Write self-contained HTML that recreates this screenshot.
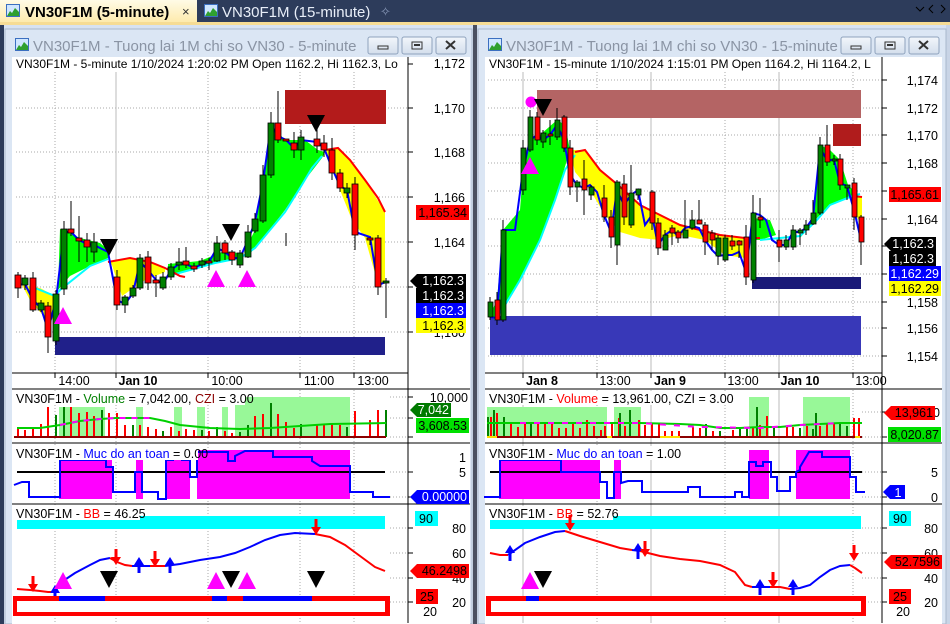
<!DOCTYPE html>
<html><head><meta charset="utf-8"><style>
html,body{margin:0;padding:0;width:950px;height:624px;overflow:hidden;background:#2d3c5b;}
svg{display:block}
text{font-family:"Liberation Sans",sans-serif;}
</style></head><body>
<svg width="950" height="624" viewBox="0 0 950 624" xmlns="http://www.w3.org/2000/svg">
<defs>
<linearGradient id="tab" x1="0" y1="0" x2="0" y2="1"><stop offset="0" stop-color="#fffbe6"/><stop offset="1" stop-color="#fde9a8"/></linearGradient>
<linearGradient id="btn" x1="0" y1="0" x2="0" y2="1"><stop offset="0" stop-color="#f2f6fb"/><stop offset="1" stop-color="#d3deec"/></linearGradient>
<g id="ico"><rect x="0" y="0" width="14" height="13" fill="#3b6fc0"/><rect x="1" y="1" width="12" height="11" fill="#cfe6ff"/><path d="M1 12 L4 7 L6 9 L9 4 L13 8 L13 12Z" fill="#2fa02f"/></g>
<g id="tu"><path d="M-9 9 L0 -8 L9 9Z" fill="#ff00ff"/></g>
<g id="td"><path d="M-9 -9 L9 -9 L0 8Z" fill="#000"/></g>
<g id="ad"><path d="M-1.5 -12 L1.5 -12 L1.5 -4 L5 -4 L0 4 L-5 -4 L-1.5 -4Z" fill="#ff0000"/></g>
<g id="au"><path d="M-1.5 12 L1.5 12 L1.5 4 L5 4 L0 -4 L-5 4 L-1.5 4Z" fill="#0000ff"/></g>
</defs>
<!-- tab bar -->
<rect x="0" y="0" width="950" height="22" fill="#2d3c5b"/>
<rect x="0" y="0" width="197" height="24" fill="url(#tab)"/>
<rect x="0" y="22" width="950" height="3" fill="#f6dc94"/>
<use href="#ico" x="6" y="4"/>
<text x="25" y="17" font-size="15" font-weight="bold" fill="#000">VN30F1M (5-minute)</text>
<text x="182" y="16" font-size="13" fill="#333">×</text>
<use href="#ico" x="204" y="4"/>
<text x="222" y="17" font-size="15" fill="#e8eef8">VN30F1M (15-minute)</text>
<text x="380" y="16" font-size="13" fill="#8898b8">✧</text>
<path d="M916 7 L920 11 L924 7" fill="none" stroke="#000" stroke-width="1"/>
<path d="M933 5 L929 9 L933 13 M941 5 L945 9 L941 13" fill="none" stroke="#000" stroke-width="1"/>
<!-- MDI background -->
<rect x="0" y="25" width="950" height="599" fill="#d7e2f1"/>
<rect x="0" y="25" width="4" height="599" fill="#2d3c5b"/>
<rect x="473" y="25" width="4" height="599" fill="#4a5060"/>
<rect x="946" y="25" width="4" height="599" fill="#c8d4e6"/>
<!-- left window frame -->
<rect x="5" y="29" width="467" height="595" fill="#dbe6f4" stroke="#a8b8cc"/>
<use href="#ico" x="15" y="38"/>
<text x="33" y="51" font-size="15" fill="#8a94a4">VN30F1M - Tuong lai 1M chi so VN30 - 5-minute</text>
<rect x="368" y="37" width="30" height="17" rx="2" fill="url(#btn)" stroke="#8fa3bd"/>
<rect x="402" y="37" width="30" height="17" rx="2" fill="url(#btn)" stroke="#8fa3bd"/>
<rect x="436" y="37" width="30" height="17" rx="2" fill="url(#btn)" stroke="#8fa3bd"/>
<rect x="378" y="46" width="10" height="3" fill="none" stroke="#333"/>
<rect x="412" y="42" width="10" height="7" fill="none" stroke="#333"/><rect x="414" y="44" width="6" height="2" fill="#333"/>
<path d="M446 41 L455 49 M455 41 L446 49" stroke="#333" stroke-width="2"/>
<rect x="12" y="57" width="458" height="567" fill="#fff"/>
<!-- right window frame -->
<rect x="478" y="29" width="468" height="595" fill="#dbe6f4" stroke="#a8b8cc"/>
<use href="#ico" x="488" y="38"/>
<text x="506" y="51" font-size="15" fill="#8a94a4">VN30F1M - Tuong lai 1M chi so VN30 - 15-minute</text>
<rect x="841" y="37" width="30" height="17" rx="2" fill="url(#btn)" stroke="#8fa3bd"/>
<rect x="875" y="37" width="30" height="17" rx="2" fill="url(#btn)" stroke="#8fa3bd"/>
<rect x="909" y="37" width="30" height="17" rx="2" fill="url(#btn)" stroke="#8fa3bd"/>
<rect x="851" y="46" width="10" height="3" fill="none" stroke="#333"/>
<rect x="885" y="42" width="10" height="7" fill="none" stroke="#333"/><rect x="887" y="44" width="6" height="2" fill="#333"/>
<path d="M919 41 L928 49 M928 41 L919 49" stroke="#333" stroke-width="2"/>
<rect x="485" y="57" width="457" height="567" fill="#fff"/>

<!-- ============ LEFT CHART ============ -->
<g stroke="#aaa" stroke-dasharray="1,2" stroke-width="1">
<path d="M16 108H408 M16 152H408 M16 197H408 M16 242H408 M16 287H408 M16 332H408"/>
<path d="M55 72V373 M208 72V373 M300 72V373 M354 72V373"/>
<path d="M55 390V623 M208 390V623 M300 390V623 M354 390V623 M116 390V623"/>
<path d="M390 397H408 M390 418H408 M390 437H408 M390 472H408 M390 497H408 M390 528H408 M390 553H408 M390 578H408 M390 602H408"/>
</g>
<path d="M116 72V373" stroke="#bbb"/>
<rect x="285" y="90" width="101" height="34" fill="#b31b1b"/>
<rect x="55" y="337" width="330" height="18" fill="#20208a"/>
<!-- clouds -->
<g>
<path d="M22 285 L40 288 L55 296 L55 320 L45 318 L30 300Z" fill="#ffff00"/>
<path d="M60 229 L80 238 L100 243 L108 250 L108 258 L90 266 L70 276 L58 290Z" fill="#00ff00"/>
<path d="M108 262 L130 258 L150 262 L165 268 L165 272 L145 280 L122 296 L112 265Z" fill="#ffff00"/>
<path d="M168 264 L200 261 L222 252 L240 253 L240 258 L215 263 L190 270 L168 276Z" fill="#00ff00"/>
<path d="M244 252 L255 230 L263 178 L271 125 L285 140 L305 140 L318 150 L325 152 L322 158 L305 180 L285 210 L265 236 L248 256Z" fill="#00ff00"/>
<path d="M325 150 L338 148 L350 160 L365 180 L385 212 L385 284 L378 284 L365 238 L352 220 L340 190 L328 158Z" fill="#ffff00"/>
</g>
<polyline points="168,276 190,270 215,263 240,258 255,248 270,230 285,212 300,188 312,168 322,156" fill="none" stroke="#00ffff" stroke-width="2"/>
<polyline points="35,288 55,296 60,290 90,266 108,259" fill="none" stroke="#00ffff" stroke-width="2"/>
<polyline points="325,150 338,148 350,160 365,180 378,198 385,212" fill="none" stroke="#ff0000" stroke-width="2"/>
<polyline points="108,262 130,258 150,262 165,268 180,276 185,277" fill="none" stroke="#ff0000" stroke-width="2"/>
<polyline points="18,285 25,284 33,300 41,308 48,330 56,300 64,232 71,232 79,240 87,244 94,245 108,252 117,300 125,304 133,293 140,262 148,270 156,280 163,284 171,270 179,264 186,264 194,268 202,264 209,262 217,248 225,252 232,258 240,258 248,240 255,222 263,182 271,125 278,136 286,140 294,148 301,140 317,142 324,148 332,168 340,186 347,190 355,232 370,237 378,285 386,282" fill="none" stroke="#0000ff" stroke-width="2"/>
<!-- left candles -->
<g stroke="#000" stroke-width="1">
<path d="M18 272V298 M25 275V290 M33 272V312 M41 300V312 M48 302V353 M56 290V345 M64 221V295 M71 201V236 M79 216V262 M87 233V262 M94 233V262 M117 270V310 M125 295V313 M133 285V298 M140 254V290 M148 251V290 M156 275V297 M163 272V290 M171 263V280 M179 248V270 M186 247V268 M194 263V272 M202 258V268 M209 258V270 M217 236V262 M225 240V260 M232 250V265 M240 250V268 M248 225V258 M255 213V233 M263 165V223 M271 112V178 M278 91V143 M286 233V246 M294 132V158 M301 130V160 M317 128V153 M324 135V157 M332 138V180 M340 169V192 M347 183V198 M355 177V250 M370 238V245 M378 235V295 M386 278V318"/>
</g>
<g stroke="#000" stroke-width="0.8">
<rect x="15" y="275" width="6" height="13" fill="#ff0000"/>
<rect x="22" y="278" width="6" height="7" fill="#008000"/>
<rect x="30" y="278" width="6" height="32" fill="#ff0000"/>
<rect x="38" y="303" width="6" height="7" fill="#008000"/>
<rect x="45" y="306" width="6" height="31" fill="#ff0000"/>
<rect x="53" y="294" width="6" height="47" fill="#008000"/>
<rect x="61" y="229" width="6" height="60" fill="#008000"/>
<rect x="68" y="229" width="6" height="4" fill="#ff0000"/>
<rect x="76" y="238" width="6" height="3" fill="#ff0000"/>
<rect x="84" y="240" width="6" height="7" fill="#ff0000"/>
<rect x="91" y="242" width="6" height="10" fill="#008000"/>
<rect x="114" y="277" width="6" height="28" fill="#ff0000"/>
<rect x="122" y="297" width="6" height="8" fill="#008000"/>
<rect x="130" y="288" width="6" height="8" fill="#008000"/>
<rect x="137" y="258" width="6" height="30" fill="#008000"/>
<rect x="145" y="257" width="6" height="26" fill="#ff0000"/>
<rect x="153" y="280" width="6" height="3" fill="#ff0000"/>
<rect x="160" y="277" width="6" height="11" fill="#008000"/>
<rect x="168" y="267" width="6" height="10" fill="#008000"/>
<rect x="176" y="262" width="6" height="3" fill="#008000"/>
<rect x="183" y="261" width="6" height="4" fill="#ff0000"/>
<rect x="191" y="266" width="6" height="3" fill="#ff0000"/>
<rect x="199" y="261" width="6" height="4" fill="#008000"/>
<rect x="206" y="261" width="6" height="2" fill="#ff0000"/>
<rect x="214" y="243" width="6" height="18" fill="#008000"/>
<rect x="222" y="243" width="6" height="10" fill="#ff0000"/>
<rect x="229" y="252" width="6" height="8" fill="#ff0000"/>
<rect x="237" y="253" width="6" height="12" fill="#008000"/>
<rect x="245" y="232" width="6" height="25" fill="#008000"/>
<rect x="252" y="219" width="6" height="12" fill="#008000"/>
<rect x="260" y="175" width="6" height="46" fill="#008000"/>
<rect x="268" y="123" width="6" height="52" fill="#008000"/>
<rect x="275" y="123" width="6" height="17" fill="#ff0000"/>
<rect x="283" y="139" width="6" height="2" fill="#ff0000"/>
<rect x="291" y="143" width="6" height="7" fill="#ff0000"/>
<rect x="298" y="137" width="6" height="13" fill="#008000"/>
<rect x="314" y="139" width="6" height="7" fill="#ff0000"/>
<rect x="321" y="143" width="6" height="7" fill="#ff0000"/>
<rect x="329" y="150" width="6" height="23" fill="#ff0000"/>
<rect x="337" y="173" width="6" height="15" fill="#ff0000"/>
<rect x="344" y="188" width="6" height="5" fill="#008000"/>
<rect x="352" y="184" width="6" height="51" fill="#ff0000"/>
<rect x="367" y="238" width="6" height="2" fill="#ff0000"/>
<rect x="375" y="238" width="6" height="49" fill="#ff0000"/>
<rect x="383" y="281" width="6" height="2" fill="#008000"/>
</g>
<use href="#tu" x="63" y="315"/><use href="#tu" x="216" y="278"/><use href="#tu" x="247" y="278"/>
<use href="#td" x="109" y="248"/><use href="#td" x="231" y="233"/><use href="#td" x="316" y="124"/>
<rect x="12" y="57" width="396" height="14" fill="#fff"/>
<text x="16" y="68" font-size="12" fill="#000">VN30F1M - 5-minute 1/10/2024 1:20:02 PM Open 1162.2, Hi 1162.3, Lo</text>
<!-- axes left -->
<path d="M408 57V623" stroke="#000"/>
<path d="M12 373H408 M12 389H470 M12 443H470 M12 504H470" stroke="#000"/>
<path d="M408 64H413 M408 108H413 M408 152H413 M408 197H413 M408 242H413 M408 287H413 M408 332H413 M55 373V378 M116 373V378 M208 373V378 M300 373V378 M354 373V378 M408 397H413 M408 418H413 M408 437H413 M408 472H413 M408 497H413 M408 528H413 M408 553H413 M408 578H413 M408 602H413" stroke="#000"/>
<g font-size="12.5" fill="#000" text-anchor="end">
<text x="465" y="68">1,172</text><text x="465" y="113">1,170</text><text x="465" y="157">1,168</text><text x="465" y="202">1,166</text><text x="465" y="247">1,164</text><text x="465" y="337">1,160</text>
<text x="468" y="402">10,000</text><text x="466" y="462">1</text><text x="466" y="477">5</text><text x="466" y="533">80</text><text x="466" y="558">60</text><text x="466" y="583">40</text><text x="466" y="607">20</text><text x="437" y="616">20</text>
</g>
<g font-size="12.5" text-anchor="middle">
<text x="74" y="385">14:00</text><text x="138" y="385" font-weight="bold">Jan 10</text><text x="227" y="385">10:00</text><text x="319" y="385">11:00</text><text x="373" y="385">13:00</text>
</g>
<rect x="416" y="205" width="53" height="15" fill="#ff0000"/><text x="467" y="217" font-size="12.5" text-anchor="end" fill="#000">1,165.34</text>
<path d="M410 281 L417 274 H466 V288 H417Z" fill="#000"/><text x="464" y="285" font-size="12.5" text-anchor="end" fill="#fff">1,162.3</text>
<rect x="416" y="288" width="50" height="15" fill="#000"/><text x="464" y="300" font-size="12.5" text-anchor="end" fill="#fff">1,162.3</text>
<rect x="416" y="303" width="50" height="15" fill="#0000ff"/><text x="464" y="315" font-size="12.5" text-anchor="end" fill="#fff">1,162.3</text>
<rect x="416" y="318" width="50" height="15" fill="#ffff00"/><text x="464" y="330" font-size="12.5" text-anchor="end" fill="#000">1,162.3</text>
<!-- left volume -->
<g fill="#98f898"><rect x="59" y="407" width="46" height="31"/><rect x="136" y="407" width="7" height="31"/><rect x="174" y="407" width="8" height="31"/><rect x="197" y="407" width="8" height="31"/><rect x="222" y="407" width="6" height="31"/><rect x="235" y="397" width="115" height="41"/></g>
<g stroke-width="2">
<path d="M18 437V427 M25 437V430 M33 437V428 M41 437V424 M48 437V407 M64 437V407 M71 437V407 M79 437V413 M87 437V412 M94 437V416 M109 437V413 M117 437V413 M125 437V425 M140 437V425 M148 437V427 M156 437V429 M171 437V427 M179 437V431 M186 437V429 M194 437V430 M209 437V431 M225 437V431 M232 437V433 M255 437V416 M263 437V414 M271 437V403 M278 437V414 M286 437V422 M294 437V428 M301 437V424 M317 437V424 M324 437V424 M332 437V424 M340 437V425 M355 437V411 M370 437V420 M378 437V410" stroke="#ff0000"/>
<path d="M56 437V415 M64 437V407 M102 437V410 M133 437V425 M163 437V431 M202 437V430 M217 437V427 M240 437V432 M248 437V425 M271 437V403 M301 437V424 M347 437V427 M386 437V410" stroke="#008000"/>
</g>
<path d="M14 437H386" stroke="#8b0000" stroke-width="2"/>
<polyline points="17,428 40,428 60,425 80,421 100,419 116,418 150,418 165,421 180,425 210,428 240,429 270,428 300,426 330,424 386,423" fill="none" stroke="#00d000" stroke-width="2"/>
<polyline points="60,425 80,421 100,419 116,418 150,418" fill="none" stroke="#ff00ff" stroke-width="2" stroke-dasharray="6,6"/>
<rect x="12" y="391" width="233" height="14" fill="#fff"/>
<text x="16" y="403" font-size="12.5"><tspan fill="#000">VN30F1M - </tspan><tspan fill="#008000">Volume</tspan><tspan fill="#000"> = 7,042.00, </tspan><tspan fill="#8b0000">CZI</tspan><tspan fill="#000"> = 3.00</tspan></text>
<path d="M410 410 L417 403 H451 V417 H417Z" fill="#007a00"/><text x="449" y="414" font-size="12.5" text-anchor="end" fill="#fff">7,042</text>
<rect x="416" y="418" width="53" height="15" fill="#00e000"/><text x="467" y="430" font-size="12.5" text-anchor="end" fill="#000">3,608.53</text>
<!-- left muc -->
<g fill="#ff00ff"><rect x="59" y="460" width="53" height="39"/><rect x="136" y="460" width="7" height="39"/><rect x="166" y="460" width="24" height="39"/><rect x="197" y="450" width="153" height="49"/></g>
<path d="M17 472H385" stroke="#000" stroke-width="2"/>
<polyline points="14,485 22,482 29,482 29,497 60,497 60,460 106,460 106,467 113,467 113,492 128,492 135,492 135,472 142,472 142,492 158,492 158,499 166,499 166,460 173,460 173,452 182,452 182,460 190,460 190,477 197,477 197,452 228,452 228,461 235,461 235,456 245,451 273,451 273,457 312,457 312,461 320,466 350,466 350,492 373,492 373,497 390,497" fill="none" stroke="#0000ff" stroke-width="2"/>
<rect x="12" y="446" width="186" height="14" fill="#fff"/>
<text x="16" y="458" font-size="12.5"><tspan fill="#000">VN30F1M - </tspan><tspan fill="#0000ff">Muc do an toan</tspan><tspan fill="#000"> = 0.00</tspan></text>
<path d="M410 497 L417 490 H469 V504 H417Z" fill="#0000ff"/><text x="467" y="501" font-size="12.5" text-anchor="end" fill="#fff">0.00000</text>
<!-- left BB -->
<rect x="17" y="516" width="368" height="13" fill="#00ffff"/>
<rect x="12" y="506" width="128" height="14" fill="#fff"/>
<text x="16" y="518" font-size="12.5"><tspan fill="#000">VN30F1M - </tspan><tspan fill="#ff0000">BB</tspan><tspan fill="#000"> = 46.25</tspan></text>
<polyline points="17,589 30,590 40,591 48,592 55,592" fill="none" stroke="#ff0000" stroke-width="2"/>
<polyline points="55,592 60,583 75,573 90,565 100,560 110,558" fill="none" stroke="#0000ff" stroke-width="2"/>
<polyline points="110,558 117,562 125,565 132,566" fill="none" stroke="#ff0000" stroke-width="2"/>
<polyline points="132,566 150,566" fill="none" stroke="#0000ff" stroke-width="2"/>
<polyline points="150,566 165,566" fill="none" stroke="#ff0000" stroke-width="2"/>
<polyline points="165,566 180,564 200,560 220,557 235,553 250,547 265,540 280,535 295,533 315,534" fill="none" stroke="#0000ff" stroke-width="2"/>
<polyline points="315,534 330,537 345,545 360,556 375,567 385,571" fill="none" stroke="#ff0000" stroke-width="2"/>
<use href="#ad" x="33" y="588"/><use href="#au" x="55" y="589"/><use href="#ad" x="116" y="561"/><use href="#au" x="139" y="561"/><use href="#ad" x="155" y="563"/><use href="#au" x="170" y="561"/><use href="#ad" x="316" y="531"/>
<use href="#tu" x="63" y="580"/><use href="#tu" x="216" y="580"/><use href="#tu" x="247" y="580"/>
<use href="#td" x="109" y="580"/><use href="#td" x="231" y="580"/><use href="#td" x="316" y="580"/>
<rect x="13" y="596" width="377" height="20" fill="#ff0000"/>
<rect x="17" y="601" width="368" height="11" fill="#fff"/>
<g fill="#0000ff"><rect x="59" y="596" width="46" height="5"/><rect x="212" y="596" width="15" height="5"/><rect x="243" y="596" width="69" height="5"/></g>
<rect x="415" y="511" width="23" height="15" fill="#00ffff"/><text x="426" y="523" font-size="12.5" text-anchor="middle">90</text>
<path d="M410 571 L417 564 H469 V578 H417Z" fill="#ff0000"/><text x="467" y="575" font-size="12.5" text-anchor="end" fill="#000">46.2498</text>
<rect x="416" y="589" width="22" height="15" fill="#ff0000"/><text x="427" y="601" font-size="12.5" text-anchor="middle">25</text>

<!-- ============ RIGHT CHART ============ -->
<g stroke="#aaa" stroke-dasharray="1,2">
<path d="M488 80H882 M488 108H882 M488 135H882 M488 163H882 M488 191H882 M488 219H882 M488 246H882 M488 274H882 M488 302H882 M488 328H882 M488 356H882"/>
<path d="M597 72V373 M725 72V373 M853 72V373 M597 390V623 M725 390V623 M853 390V623"/>
<path d="M862 412H882 M862 437H882 M862 472H882 M862 497H882 M862 528H882 M862 553H882 M862 578H882 M862 602H882"/>
</g>
<path d="M523 72V373 M651 72V373 M779 72V373 M523 390V623 M651 390V623 M779 390V623" stroke="#bbb"/>
<rect x="537" y="90" width="324" height="28" fill="#b46464"/>
<rect x="833" y="124" width="28" height="22" fill="#b01c1c"/>
<rect x="752" y="277" width="109" height="12" fill="#1a1a78"/>
<rect x="490" y="316" width="371" height="39" fill="#3838b8"/>
<path d="M490 315 L497 300 L503 230 L520 210 L523 170 L530 140 L540 135 L557 120 L565 125 L570 150 L555 200 L540 240 L520 280 L505 305 L495 320Z" fill="#00ff00"/>
<path d="M570 150 L585 150 L600 170 L618 185 L640 205 L660 215 L680 225 L700 230 L720 235 L745 238 L745 258 L725 255 L705 240 L680 235 L660 240 L640 238 L620 232 L605 215 L590 190 L575 172Z" fill="#ffff00"/>
<path d="M753 218 L770 220 L776 235 L760 240 L752 240Z" fill="#00ff00"/>
<path d="M800 236 L813 220 L820 145 L830 150 L840 160 L848 185 L858 195 L850 197 L830 205 L815 220 L800 238Z" fill="#00ff00"/>
<path d="M856 196 L862 196 L862 226 L856 215Z" fill="#ffff00"/>
<polyline points="495,320 505,305 520,280 540,240 555,200 565,170 575,155" fill="none" stroke="#00ffff" stroke-width="2"/>
<polyline points="760,240 780,238 800,236 815,222 830,205 850,197 860,194" fill="none" stroke="#00ffff" stroke-width="2"/>
<polyline points="575,152 585,150 600,170 618,185 640,205 660,215 680,225 700,230 720,235 745,238 760,238" fill="none" stroke="#ff0000" stroke-width="2"/>
<polyline points="852,196 862,197" fill="none" stroke="#ff0000" stroke-width="2"/>
<polyline points="490,317 497,318 503,230 515,230 523,170 530,140 537,135 543,140 550,135 557,125 564,140 570,175 577,185 584,188 590,185 597,192 604,215 611,232 617,190 624,205 631,195 638,190 645,225 652,215 658,245 665,235 672,230 678,236 685,228 692,226 699,228 705,240 712,250 718,256 725,255 732,255 739,252 746,272 753,213 760,215 766,220 772,240 779,245 786,245 793,232 800,232 806,228 813,218 820,148 827,160 834,160 840,183 847,186 854,210 861,240" fill="none" stroke="#0000ff" stroke-width="2"/>
<g stroke="#000">
<path d="M490 297V320 M497 292V325 M503 220V322 M523 140V195 M530 110V152 M537 112V145 M543 130V148 M550 120V145 M557 108V140 M564 115V152 M570 140V195 M577 180V202 M584 160V215 M591 185V200 M604 185V222 M611 210V248 M617 180V265 M624 175V225 M631 165V228 M638 190V200 M652 190V230 M658 218V255 M665 230V245 M672 225V245 M678 230V243 M685 200V238 M692 210V230 M699 200V220 M705 222V255 M712 230V250 M718 235V265 M725 235V262 M732 235V250 M739 240V258 M746 225V285 M753 195V283 M760 198V228 M779 230V262 M786 235V250 M793 225V250 M800 228V245 M806 220V235 M813 200V225 M820 137V215 M827 125V166 M834 155V165 M840 154V190 M847 185V200 M854 178V230 M861 215V265"/>
</g>
<g stroke="#000" stroke-width="0.8">
<rect x="488" y="302" width="5" height="15" fill="#008000"/>
<rect x="495" y="300" width="5" height="20" fill="#ff0000"/>
<rect x="501" y="230" width="5" height="90" fill="#008000"/>
<rect x="521" y="148" width="5" height="42" fill="#008000"/>
<rect x="528" y="117" width="5" height="33" fill="#008000"/>
<rect x="535" y="117" width="5" height="23" fill="#ff0000"/>
<rect x="541" y="133" width="5" height="9" fill="#008000"/>
<rect x="548" y="134" width="5" height="2" fill="#ff0000"/>
<rect x="555" y="120" width="5" height="17" fill="#008000"/>
<rect x="562" y="117" width="5" height="31" fill="#ff0000"/>
<rect x="568" y="148" width="5" height="39" fill="#ff0000"/>
<rect x="575" y="182" width="5" height="5" fill="#008000"/>
<rect x="582" y="179" width="5" height="11" fill="#ff0000"/>
<rect x="589" y="187" width="5" height="8" fill="#008000"/>
<rect x="602" y="198" width="5" height="19" fill="#ff0000"/>
<rect x="609" y="217" width="5" height="20" fill="#ff0000"/>
<rect x="615" y="182" width="5" height="63" fill="#008000"/>
<rect x="622" y="184" width="5" height="33" fill="#ff0000"/>
<rect x="629" y="193" width="5" height="32" fill="#008000"/>
<rect x="636" y="189" width="5" height="6" fill="#008000"/>
<rect x="650" y="192" width="5" height="31" fill="#ff0000"/>
<rect x="656" y="223" width="5" height="25" fill="#ff0000"/>
<rect x="663" y="235" width="5" height="15" fill="#008000"/>
<rect x="670" y="228" width="5" height="5" fill="#ff0000"/>
<rect x="676" y="232" width="5" height="6" fill="#ff0000"/>
<rect x="683" y="230" width="5" height="8" fill="#008000"/>
<rect x="690" y="220" width="5" height="8" fill="#008000"/>
<rect x="697" y="220" width="5" height="4" fill="#ff0000"/>
<rect x="703" y="225" width="5" height="17" fill="#ff0000"/>
<rect x="710" y="233" width="5" height="7" fill="#ff0000"/>
<rect x="716" y="238" width="5" height="18" fill="#008000"/>
<rect x="723" y="238" width="5" height="22" fill="#008000"/>
<rect x="730" y="241" width="5" height="5" fill="#ff0000"/>
<rect x="737" y="241" width="5" height="4" fill="#ff0000"/>
<rect x="744" y="237" width="5" height="40" fill="#ff0000"/>
<rect x="751" y="213" width="5" height="67" fill="#008000"/>
<rect x="758" y="217" width="5" height="3" fill="#ff0000"/>
<rect x="777" y="240" width="5" height="7" fill="#ff0000"/>
<rect x="784" y="240" width="5" height="7" fill="#008000"/>
<rect x="791" y="230" width="5" height="17" fill="#008000"/>
<rect x="798" y="230" width="5" height="3" fill="#008000"/>
<rect x="804" y="225" width="5" height="5" fill="#008000"/>
<rect x="811" y="213" width="5" height="11" fill="#008000"/>
<rect x="818" y="145" width="5" height="68" fill="#008000"/>
<rect x="825" y="145" width="5" height="17" fill="#ff0000"/>
<rect x="832" y="159" width="5" height="2" fill="#008000"/>
<rect x="838" y="159" width="5" height="26" fill="#ff0000"/>
<rect x="845" y="185" width="5" height="3" fill="#008000"/>
<rect x="852" y="183" width="5" height="34" fill="#ff0000"/>
<rect x="859" y="217" width="5" height="25" fill="#ff0000"/>
</g>
<circle cx="531" cy="102" r="5.5" fill="#ff00ff"/>
<use href="#td" x="543" y="108" transform="translate(0,0)"/>
<use href="#tu" x="530" y="165"/>
<rect x="485" y="57" width="397" height="14" fill="#fff"/>
<text x="489" y="68" font-size="12" fill="#000">VN30F1M - 15-minute 1/10/2024 1:15:01 PM Open 1164.2, Hi 1164.2, L</text>
<path d="M882 57V623" stroke="#000"/>
<path d="M485 373H882 M485 389H942 M485 443H942 M485 504H942" stroke="#000"/>
<path d="M882 80H887 M882 108H887 M882 135H887 M882 163H887 M882 191H887 M882 219H887 M882 246H887 M882 274H887 M882 302H887 M882 328H887 M882 356H887 M523 373V378 M597 373V378 M651 373V378 M725 373V378 M779 373V378 M853 373V378 M882 412H887 M882 437H887 M882 472H887 M882 497H887 M882 528H887 M882 553H887 M882 578H887 M882 602H887" stroke="#000"/>
<g font-size="12.5" fill="#000" text-anchor="end">
<text x="938" y="85">1,174</text><text x="938" y="113">1,172</text><text x="938" y="140">1,170</text><text x="938" y="168">1,168</text><text x="938" y="196">1,166</text><text x="938" y="224">1,164</text><text x="938" y="307">1,158</text><text x="938" y="333">1,156</text><text x="938" y="361">1,154</text>
<text x="940" y="417">20,000</text><text x="938" y="477">5</text><text x="938" y="502">0</text><text x="938" y="533">80</text><text x="938" y="558">60</text><text x="938" y="583">40</text><text x="938" y="607">20</text><text x="910" y="616">20</text>
</g>
<g font-size="12.5" text-anchor="middle">
<text x="542" y="385" font-weight="bold">Jan 8</text><text x="615" y="385">13:00</text><text x="670" y="385" font-weight="bold">Jan 9</text><text x="743" y="385">13:00</text><text x="800" y="385" font-weight="bold">Jan 10</text><text x="871" y="385">13:00</text>
</g>
<rect x="889" y="187" width="52" height="15" fill="#ff0000"/><text x="939" y="199" font-size="12.5" text-anchor="end">1,165.61</text>
<path d="M884 244 L891 237 H936 V251 H891Z" fill="#000"/><text x="934" y="248" font-size="12.5" text-anchor="end" fill="#fff">1,162.3</text>
<rect x="889" y="251" width="47" height="15" fill="#000"/><text x="934" y="263" font-size="12.5" text-anchor="end" fill="#fff">1,162.3</text>
<rect x="889" y="266" width="52" height="15" fill="#0000ff"/><text x="939" y="278" font-size="12.5" text-anchor="end" fill="#fff">1,162.29</text>
<rect x="889" y="281" width="52" height="15" fill="#ffff00"/><text x="939" y="293" font-size="12.5" text-anchor="end">1,162.29</text>
<!-- right volume -->
<g fill="#98f898"><rect x="487" y="407" width="120" height="31"/><rect x="614" y="407" width="27" height="31"/><rect x="749" y="397" width="20" height="41"/><rect x="803" y="397" width="47" height="41"/></g>
<g stroke-width="2">
<path d="M491 437V417 M497 437V413 M511 437V422 M518 437V427 M525 437V424 M538 437V424 M545 437V422 M552 437V424 M559 437V428 M566 437V428 M573 437V424 M580 437V428 M587 437V420 M594 437V426 M601 437V430 M605 437V426 M612 437V424 M619 437V418 M625 437V426 M639 437V420 M645 437V425 M652 437V424 M659 437V424 M665 437V431 M672 437V431 M679 437V431 M693 437V427 M700 437V428 M713 437V431 M733 437V430 M753 437V427 M760 437V425 M767 437V416 M787 437V426 M793 437V427 M807 437V426 M820 437V426 M827 437V423 M834 437V423 M854 437V418 M859 437V418" stroke="#ff0000"/>
<path d="M488 437V417 M494 437V410 M504 437V417 M531 437V422 M620 437V413 M630 437V410 M706 437V424 M720 437V431 M740 437V429 M747 437V428 M757 437V407 M774 437V428 M800 437V428 M813 437V429 M816 437V413 M840 437V424 M847 437V426" stroke="#008000"/>
</g>
<path d="M487 437H862" stroke="#8b0000" stroke-width="2"/>
<path d="M487 437H497 M607 437H612 M660 437H680 M855 437H860" stroke="#ffe000" stroke-width="2"/>
<polyline points="487,423 520,423 560,423 600,423 640,423 680,424 700,425 720,428 740,428 760,427 780,427 800,425 820,424 840,423 862,423" fill="none" stroke="#00d000" stroke-width="2"/>
<polyline points="520,423 560,423 600,423 640,423 700,427 760,428 800,425 840,423" fill="none" stroke="#ff00ff" stroke-width="2" stroke-dasharray="6,8"/>
<rect x="485" y="391" width="250" height="14" fill="#fff"/>
<text x="489" y="403" font-size="12.5"><tspan fill="#000">VN30F1M - </tspan><tspan fill="#ff0000">Volume</tspan><tspan fill="#000"> = 13,961.00, CZI = 3.00</tspan></text>
<path d="M884 413 L891 406 H935 V420 H891Z" fill="#ff0000"/><text x="933" y="417" font-size="12.5" text-anchor="end">13,961</text>
<rect x="888" y="427" width="53" height="15" fill="#00e000"/><text x="939" y="439" font-size="12.5" text-anchor="end">8,020.87</text>
<!-- right muc -->
<g fill="#ff00ff"><rect x="499" y="460" width="101" height="39"/><rect x="614" y="460" width="7" height="39"/><rect x="749" y="450" width="20" height="49"/><rect x="796" y="450" width="54" height="49"/></g>
<path d="M490 472H862" stroke="#000" stroke-width="2"/>
<polyline points="484,497 500,497 500,460 561,460 561,472 600,472 600,482 607,482 607,498 614,498 614,472 621,472 621,483 628,481 642,481 642,492 688,492 688,487 700,487 700,497 735,497 735,492 742,492 742,497 749,497 749,462 756,462 756,466 763,466 763,462 771,462 771,477 777,477 777,491 790,491 790,477 796,477 796,472 800,470 800,467 809,452 822,452 822,457 850,457 850,477 856,477 856,492 865,492" fill="none" stroke="#0000ff" stroke-width="2"/>
<rect x="485" y="446" width="190" height="14" fill="#fff"/>
<text x="489" y="458" font-size="12.5"><tspan fill="#000">VN30F1M - </tspan><tspan fill="#0000ff">Muc do an toan</tspan><tspan fill="#000"> = 1.00</tspan></text>
<path d="M883 492 L890 485 H905 V499 H890Z" fill="#0000ff"/><text x="898" y="497" font-size="12.5" text-anchor="middle" fill="#fff">1</text>
<!-- right BB -->
<rect x="490" y="516" width="371" height="13" fill="#00ffff"/>
<rect x="485" y="506" width="128" height="14" fill="#fff"/>
<text x="489" y="518" font-size="12.5"><tspan fill="#000">VN30F1M - </tspan><tspan fill="#ff0000">BB</tspan><tspan fill="#000"> = 52.76</tspan></text>
<polyline points="490,553 500,555 508,555" fill="none" stroke="#ff0000" stroke-width="2"/>
<polyline points="508,555 525,543 540,537 555,532 565,531" fill="none" stroke="#0000ff" stroke-width="2"/>
<polyline points="565,531 580,536 600,542 620,548 632,550" fill="none" stroke="#ff0000" stroke-width="2"/>
<polyline points="632,550 640,551" fill="none" stroke="#0000ff" stroke-width="2"/>
<polyline points="640,551 660,556 680,559 700,561 720,565 735,572 745,585 752,587" fill="none" stroke="#ff0000" stroke-width="2"/>
<polyline points="752,587 770,587" fill="none" stroke="#0000ff" stroke-width="2"/>
<polyline points="770,587 780,587 790,589" fill="none" stroke="#ff0000" stroke-width="2"/>
<polyline points="790,589 800,588 810,585 820,577 830,570 840,566 850,565" fill="none" stroke="#0000ff" stroke-width="2"/>
<polyline points="850,565 855,568 862,573" fill="none" stroke="#ff0000" stroke-width="2"/>
<use href="#au" x="510" y="549"/><use href="#ad" x="570" y="527"/><use href="#au" x="638" y="547"/><use href="#ad" x="645" y="553"/><use href="#au" x="760" y="583"/><use href="#ad" x="773" y="584"/><use href="#au" x="793" y="583"/><use href="#ad" x="854" y="557"/>
<use href="#tu" x="530" y="580"/><use href="#td" x="543" y="580"/>
<rect x="486" y="596" width="380" height="20" fill="#ff0000"/>
<rect x="491" y="601" width="370" height="11" fill="#fff"/>
<rect x="526" y="596" width="13" height="5" fill="#0000ff"/>
<rect x="889" y="511" width="22" height="15" fill="#00ffff"/><text x="900" y="523" font-size="12.5" text-anchor="middle">90</text>
<path d="M884 562 L891 555 H942 V569 H891Z" fill="#ff0000"/><text x="940" y="566" font-size="12.5" text-anchor="end">52.7596</text>
<rect x="889" y="589" width="22" height="15" fill="#ff0000"/><text x="900" y="601" font-size="12.5" text-anchor="middle">25</text>
</svg>
</body></html>
